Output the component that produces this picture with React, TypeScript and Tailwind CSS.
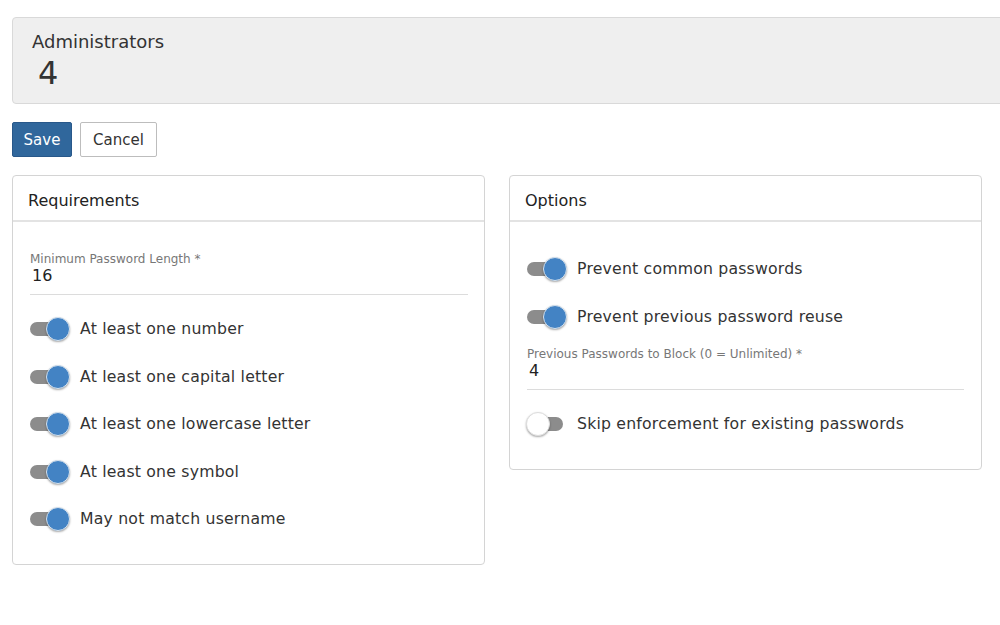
import React from "react";

function Toggle({ on }: { on: boolean }) {
  return (
    <div className="relative w-[40px] h-[24px] shrink-0">
      <div className="absolute left-0 top-[5px] w-[36px] h-[14px] rounded-full bg-[#8c8c8c]" />
      {on ? (
        <div className="absolute left-[16px] top-0 w-[24px] h-[24px] rounded-full bg-[#4383c4] border border-[#d6e2ee] shadow-[0_1px_2px_rgba(0,0,0,0.35)]" />
      ) : (
        <div className="absolute left-[-1px] top-0 w-[24px] h-[24px] rounded-full bg-white border border-[#dddddd] shadow-[0_1px_2px_rgba(0,0,0,0.35)]" />
      )}
    </div>
  );
}

function ToggleRow({ on, label }: { on: boolean; label: string }) {
  return (
    <div className="flex items-center h-[24px] gap-[10px]">
      <Toggle on={on} />
      <span className="text-[15.7px] text-[#333] tracking-[0.2px]">{label}</span>
    </div>
  );
}

function Field({ label, value }: { label: string; value: string }) {
  return (
    <div className="border-b border-[#dcdcdc] pb-[8px]">
      <div className="text-[12px] text-[#777] leading-[14px]">{label}</div>
      <div className="text-[16px] text-[#222] leading-[20px] pl-[2px]">{value}</div>
    </div>
  );
}

function Panel({ title, children }: { title: string; children: React.ReactNode }) {
  return (
    <div className="border border-[#d4d4d4] rounded-[4px] bg-white">
      <div className="h-[46px] flex items-center px-[15px] pt-[6px] border-b-2 border-[#e3e3e3] text-[16px] text-[#222]">
        {title}
      </div>
      {children}
    </div>
  );
}

export default function App() {
  return (
    <div
      className="w-[1000px] h-[625px] overflow-hidden bg-white relative"
      style={{ fontFamily: '"DejaVu Sans", "Noto Sans", sans-serif' }}
    >
      <div className="pt-[17px] pl-[12px]">
        <div className="w-[1000px] h-[87px] bg-[#efefef] border border-[#d9d9d9] rounded-[4px] pl-[19px] pt-[12px]">
          <div className="text-[18px] text-[#333] leading-[24px]">Administrators</div>
          <div className="text-[32px] text-[#333] leading-[38px] pl-[6px]">4</div>
        </div>
      </div>
      <div className="flex gap-[8px] pl-[12px] mt-[18px]">
        <button className="h-[35px] w-[60px] pt-[2px] bg-[#30679c] border border-[#28588a] rounded-[2px] text-white text-[15px]">
          Save
        </button>
        <button className="h-[35px] w-[77px] pt-[2px] bg-white border border-[#bdbdbd] rounded-[2px] text-[#333] text-[15px]">
          Cancel
        </button>
      </div>
      <div className="grid grid-cols-[473px_473px] gap-[24px] pl-[12px] mt-[18px] items-start">
        <Panel title="Requirements">
          <div className="pl-[17px] pr-[16px] pt-[30px] pb-[33px]">
            <Field label="Minimum Password Length *" value="16" />
            <div className="flex flex-col gap-[23.5px] mt-[22px]">
              <ToggleRow on label="At least one number" />
              <ToggleRow on label="At least one capital letter" />
              <ToggleRow on label="At least one lowercase letter" />
              <ToggleRow on label="At least one symbol" />
              <ToggleRow on label="May not match username" />
            </div>
          </div>
        </Panel>
        <Panel title="Options">
          <div className="pl-[17px] pr-[17px] pt-[35px] pb-[33px]">
            <div className="flex flex-col gap-[24px]">
              <ToggleRow on label="Prevent common passwords" />
              <ToggleRow on label="Prevent previous password reuse" />
            </div>
            <div className="mt-[18px]">
              <Field label="Previous Passwords to Block (0 = Unlimited) *" value="4" />
            </div>
            <div className="mt-[22px]">
              <ToggleRow on={false} label="Skip enforcement for existing passwords" />
            </div>
          </div>
        </Panel>
      </div>
    </div>
  );
}
